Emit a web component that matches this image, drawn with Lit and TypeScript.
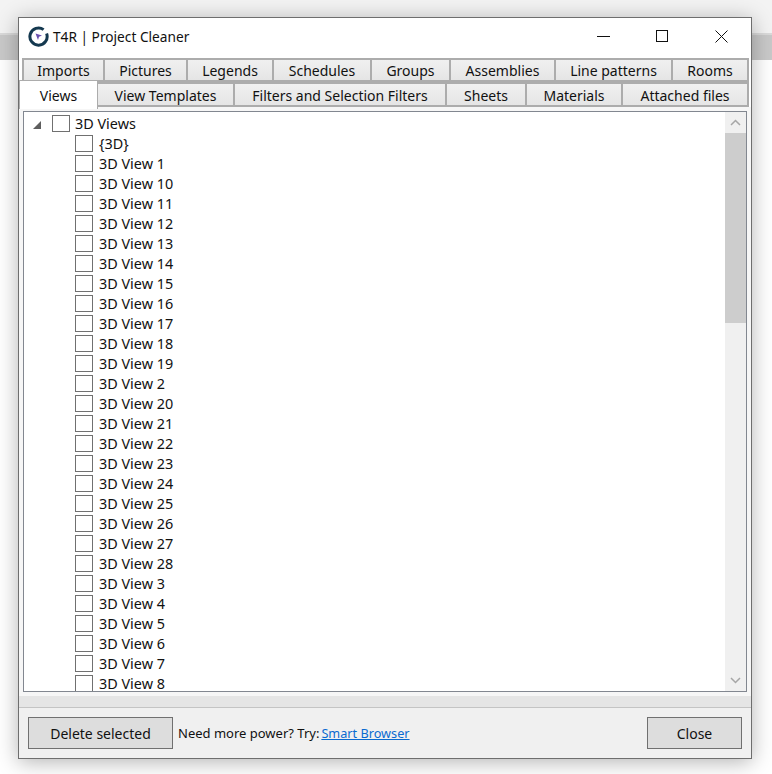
import { LitElement, html, css } from "lit";
import { customElement } from "lit/decorators.js";

const ROW1 = [["Imports",83],["Pictures",83],["Legends",86],["Schedules",98],["Groups",79],["Assemblies",105],["Line patterns",117],["Rooms",76]] as const;
const ROW2 = [["View Templates",137],["Filters and Selection Filters",212],["Sheets",80],["Materials",96],["Attached files",126]] as const;
const ITEMS = ["{3D}","3D View 1","3D View 10","3D View 11","3D View 12","3D View 13","3D View 14","3D View 15","3D View 16","3D View 17","3D View 18","3D View 19","3D View 2","3D View 20","3D View 21","3D View 22","3D View 23","3D View 24","3D View 25","3D View 26","3D View 27","3D View 28","3D View 3","3D View 4","3D View 5","3D View 6","3D View 7","3D View 8"];

@customElement("app-root")
export class AppRoot extends LitElement {
  static styles = css`
    :host { display: block; position: relative; height: 774px; overflow: hidden; background: #fff; font-family: "Noto Sans", "Open Sans", sans-serif; font-size: 14px; color: #111; }
    .desk-top { height: 33px; background: #f3f3f3; }
    .desk-band { height: 27px; background: #c9c9c9; border-top: 2px solid #dadada; box-sizing: border-box; }
    .window { position: absolute; left: 18px; top: 17px; width: 734px; height: 742px; box-sizing: border-box; border: 1px solid #6e6e6e; background: #fff; display: flex; flex-direction: column; box-shadow: 0 3px 20px rgba(0,0,0,.3); }
    .titlebar { height: 40px; flex: none; display: flex; align-items: center; padding: 0 0 4px 9px; box-sizing: border-box; }
    .logo { width: 21px; height: 21px; margin-right: 4px; }
    .title { flex: 1; font-size: 13.7px; }
    .winbtn { width: 59px; height: 36px; display: flex; align-items: center; justify-content: center; }
    .winbtn svg { display: block; }
    .tabs { flex: none; display: flex; flex-direction: column; }
    .tabrow { display: flex; height: 25px; box-sizing: border-box; }
    .r1 { padding-left: 3px; height: 24px; }
    .tab { box-sizing: border-box; display: flex; align-items: center; justify-content: center; border: 2px solid #acacac; border-left: 0; background: linear-gradient(#f0f0f0, #e5e5e5); }
    .r1 .tab:first-child { border-left: 2px solid #acacac; }
    .r2 { position: relative; padding-left: 79px; }
    .r2 .tab { padding-top: 1px; }
    .r2 .tab.sel { position: absolute; left: 0; top: -2px; height: 29px; width: 79px; background: #fff; border: 1px solid #acacac; border-bottom: 0; z-index: 2; padding: 0; }
    .main { flex: 1; min-height: 0; background: #f6f6f6; padding: 4px 4px 0 4px; display: flex; flex-direction: column; }
    .list { height: 581px; flex: none; box-sizing: border-box; border: 1px solid #828790; background: #fff; display: flex; overflow: hidden; }
    .tree { flex: 1; min-width: 0; overflow: hidden; padding-top: 1px; font-size: 14.4px; }
    .row { height: 20px; display: flex; align-items: center; white-space: nowrap; padding-left: 51px; }
    .row.root { padding-left: 9px; }
    .expander { width: 0; height: 0; margin-right: 11px; border-style: solid; border-width: 0 0 8px 8px; border-color: transparent transparent #5e5e5e transparent; margin-top: 3px; }
    .check { flex: none; width: 18px; height: 17px; box-sizing: border-box; border: 1px solid #707070; background: #fff; margin-right: 6px; }
    .root .check { margin-right: 5px; }
    .sb { flex: none; width: 21px; background: #f0f0f0; display: flex; flex-direction: column; }
    .sb-btn { flex: none; height: 21px; display: flex; align-items: center; justify-content: center; }
    .sb-thumb { flex: none; height: 190px; background: #cdcdcd; }
    .sb-track { flex: 1; }
    .hbar { flex: none; height: 11px; margin: 4px -4px 0 -4px; background: #e5e5e5; border-bottom: 1px solid #c4c4c4; box-sizing: content-box; }
    .footer { flex: 1; margin: 0 -4px; background: #f0f0f0; display: flex; align-items: center; padding: 0 9px; }
    .btn { box-sizing: border-box; height: 32px; border: 1px solid #707070; background: #dddddd; display: flex; align-items: center; justify-content: center; }
    .del { width: 145px; margin-right: 5px; }
    .close { width: 95px; margin-left: auto; }
    .power { margin-right: 2px; font-size: 13px; }
    .link { color: #0a6ad0; text-decoration: underline; font-size: 12.7px; }
  `;

  render() {
    return html`
      <div class="desk-top"></div>
      <div class="desk-band"></div>
      <div class="window">
        <div class="titlebar">
          <svg class="logo" viewBox="0 0 21 21">
            <path d="M15.6 3.6A8.6 8.6 0 1 0 18.6 7.6" fill="none" stroke="#14384f" stroke-width="3"/>
            <path d="M7.5 7.5l6.5 2-3 1.2-1 3.3z" fill="#6a4fb0"/>
          </svg>
          <span class="title">T4R | Project Cleaner</span>
          <div class="winbtn"><svg width="13" height="13" viewBox="0 0 13 13"><path d="M0 6.5h13" stroke="#111" fill="none"/></svg></div>
          <div class="winbtn"><svg width="13" height="13" viewBox="0 0 13 13"><rect x=".5" y=".5" width="11" height="11" stroke="#111" fill="none"/></svg></div>
          <div class="winbtn"><svg width="13" height="13" viewBox="0 0 13 13"><path d="M.5.5l12 12M12.5.5l-12 12" stroke="#111" fill="none"/></svg></div>
        </div>
        <div class="tabs">
          <div class="tabrow r1">${ROW1.map(([t, w]) => html`<div class="tab" style="width:${w}px">${t}</div>`)}</div>
          <div class="tabrow r2">
            <div class="tab sel">Views</div>
            ${ROW2.map(([t, w]) => html`<div class="tab" style="width:${w}px">${t}</div>`)}
          </div>
        </div>
        <div class="main">
          <div class="list">
            <div class="tree">
              <div class="row root"><span class="expander"></span><span class="check"></span>3D Views</div>
              ${ITEMS.map(t => html`<div class="row"><span class="check"></span>${t}</div>`)}
            </div>
            <div class="sb">
              <div class="sb-btn"><svg width="11" height="7" viewBox="0 0 11 7"><path d="M1 6l4.5-4.5L10 6" fill="none" stroke="#a6a6a6" stroke-width="1.5"/></svg></div>
              <div class="sb-thumb"></div>
              <div class="sb-track"></div>
              <div class="sb-btn"><svg width="11" height="7" viewBox="0 0 11 7"><path d="M1 1l4.5 4.5L10 1" fill="none" stroke="#a6a6a6" stroke-width="1.5"/></svg></div>
            </div>
          </div>
          <div class="hbar"></div>
          <div class="footer">
            <div class="btn del">Delete selected</div>
            <span class="power">Need more power? Try:</span>
            <span class="link">Smart Browser</span>
            <div class="btn close">Close</div>
          </div>
        </div>
      </div>
    `;
  }
}
